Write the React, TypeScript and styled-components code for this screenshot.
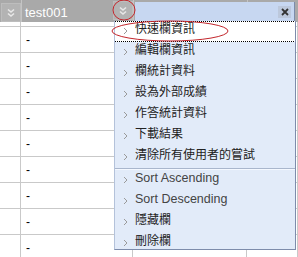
import React from "react";
import styled, { createGlobalStyle } from "styled-components";

const GlobalStyle = createGlobalStyle`
  html, body {
    margin: 0;
    padding: 0;
    background: #ffffff;
    overflow: hidden;
  }
  body {
    font-family: "Liberation Sans", Arial, sans-serif;
  }
`;

const Page = styled.div`
  position: relative;
  width: 298px;
  height: 257px;
  overflow: hidden;
  background: #ffffff;
`;

const COLS = "21px 112px 114px 51px";

const HeaderRow = styled.div`
  display: grid;
  grid-template-columns: ${COLS};
  height: 22px;
  background: #a9a9a9;
`;

const HeaderCell = styled.div<{ $first?: boolean }>`
  display: flex;
  align-items: flex-start;
  justify-content: ${(p) => (p.$first ? "center" : "space-between")};
  padding: ${(p) => (p.$first ? "2px 0 0" : "0 0 0 3px")};
  border-left: ${(p) => (p.$first ? "none" : "1px solid #c4c4c4")};
  color: #ffffff;
  font-size: 13px;
`;

const HeaderText = styled.span`
  padding-top: 5px;
  line-height: 16px;
`;

const DropButton = styled.div`
  width: 18px;
  height: 17px;
  margin-top: 1px;
  background: #b3b3b3;
  border: 1px solid #bdbdbd;
  display: flex;
  align-items: center;
  justify-content: center;
`;

const GapRow = styled.div`
  height: 4px;
  border-bottom: 1px solid #c9c9c9;
  display: grid;
  grid-template-columns: ${COLS};
`;

const Row = styled.div`
  display: grid;
  grid-template-columns: ${COLS};
  height: 25px;
  border-bottom: 1px solid #c9c9c9;
`;

const Cell = styled.div`
  border-right: 1px solid #c9c9c9;
  font-size: 12px;
  color: #000;
  padding: 7px 0 0 5px;
  line-height: 12px;
`;

const Menu = styled.div`
  position: absolute;
  left: 114px;
  top: 21px;
  width: 180px;
  height: 228px;
  overflow: hidden;
  background: #e2ebf9;
  border-left: 1px solid #b4c2da;
  border-right: 1px solid #7d8cab;
  border-bottom: 1px solid #7d8cab;
`;

const MenuTab = styled.div`
  position: absolute;
  left: 135px;
  top: 2px;
  width: 160px;
  height: 19px;
  background: #c7d7f1;
  border-right: 1px solid #7d8cab;
  display: flex;
  justify-content: flex-end;
  align-items: center;
  padding-right: 3px;
  box-sizing: border-box;
`;

const CloseBtn = styled.div`
  width: 13px;
  height: 12px;
  background: #bcc8dc;
  display: flex;
  align-items: center;
  justify-content: center;
`;

const Item = styled.div<{ $active?: boolean; $latin?: boolean }>`
  display: flex;
  align-items: flex-start;
  height: 21px;
  box-sizing: border-box;
  padding: 0 0 0 8px;
  gap: 7px;
  line-height: 15px;
  background: ${(p) => (p.$active ? "#ffffff" : "transparent")};
  border: ${(p) => (p.$active ? "1px dotted #000" : "1px solid transparent")};
  margin: 0 -1px;
  color: ${(p) => (p.$latin ? "#444" : "#222")};
  font-size: ${(p) => (p.$latin ? "12.5px" : "12px")};
  font-family: ${(p) =>
    p.$latin
      ? `"Liberation Sans", Arial, sans-serif`
      : `"Liberation Sans", "Noto Sans CJK TC", sans-serif`};
  white-space: nowrap;
`;

const Separator = styled.div`
  height: 0;
  border-top: 1px solid #a9b6cc;
  border-bottom: 1px solid #f4f8ff;
`;

const Overlay = styled.svg`
  position: absolute;
  left: 0;
  top: 0;
  pointer-events: none;
`;

const DoubleChevron = () => (
  <svg width="10" height="10" viewBox="0 0 10 10">
    <polyline points="2,1.5 5,4 8,1.5" fill="none" stroke="#e8e8e8" strokeWidth="1.6" />
    <polyline points="2,5.5 5,8 8,5.5" fill="none" stroke="#e8e8e8" strokeWidth="1.6" />
  </svg>
);

const Arrow = () => (
  <svg width="5" height="8" viewBox="0 0 5 8" style={{ marginTop: 5 }}>
    <polyline points="1,1 4,4 1,7" fill="none" stroke="#9a9a9a" strokeWidth="1" />
  </svg>
);

const items: { label: string; latin?: boolean; sepBefore?: boolean }[] = [
  { label: "快速欄資訊" },
  { label: "編輯欄資訊" },
  { label: "欄統計資料" },
  { label: "設為外部成績" },
  { label: "作答統計資料" },
  { label: "下載結果" },
  { label: "清除所有使用者的嘗試" },
  { label: "Sort Ascending", latin: true, sepBefore: true },
  { label: "Sort Descending", latin: true },
  { label: "隱藏欄" },
  { label: "刪除欄" },
];

const App = () => {
  const rows = Array.from({ length: 9 });
  return (
    <Page>
      <GlobalStyle />
      <HeaderRow>
        <HeaderCell $first>
          <DropButton>
            <DoubleChevron />
          </DropButton>
        </HeaderCell>
        <HeaderCell>
          <HeaderText>test001</HeaderText>
          <DropButton>
            <DoubleChevron />
          </DropButton>
        </HeaderCell>
        <HeaderCell />
        <HeaderCell />
      </HeaderRow>
      <GapRow>
        <Cell />
        <Cell />
        <Cell />
        <Cell />
      </GapRow>
      {rows.map((_, i) => (
        <Row key={i}>
          <Cell />
          <Cell>-</Cell>
          <Cell />
          <Cell />
        </Row>
      ))}

      <MenuTab>
        <CloseBtn>
          <svg width="8" height="8" viewBox="0 0 8 8">
            <path d="M1 1 L7 7 M7 1 L1 7" stroke="#333" strokeWidth="1.8" />
          </svg>
        </CloseBtn>
      </MenuTab>
      <Menu>
        {items.map((it, i) => (
          <React.Fragment key={it.label}>
            {it.sepBefore && <Separator />}
            <Item $active={i === 0} $latin={it.latin}>
              <Arrow />
              <span>{it.label}</span>
            </Item>
          </React.Fragment>
        ))}
      </Menu>

      <Overlay width="298" height="257">
        <ellipse cx="124" cy="10" rx="11" ry="10" fill="none" stroke="#c3262c" strokeWidth="1" />
        <ellipse cx="170" cy="31" rx="58" ry="10" fill="none" stroke="#c3262c" strokeWidth="1" />
      </Overlay>
    </Page>
  );
};

export default App;
